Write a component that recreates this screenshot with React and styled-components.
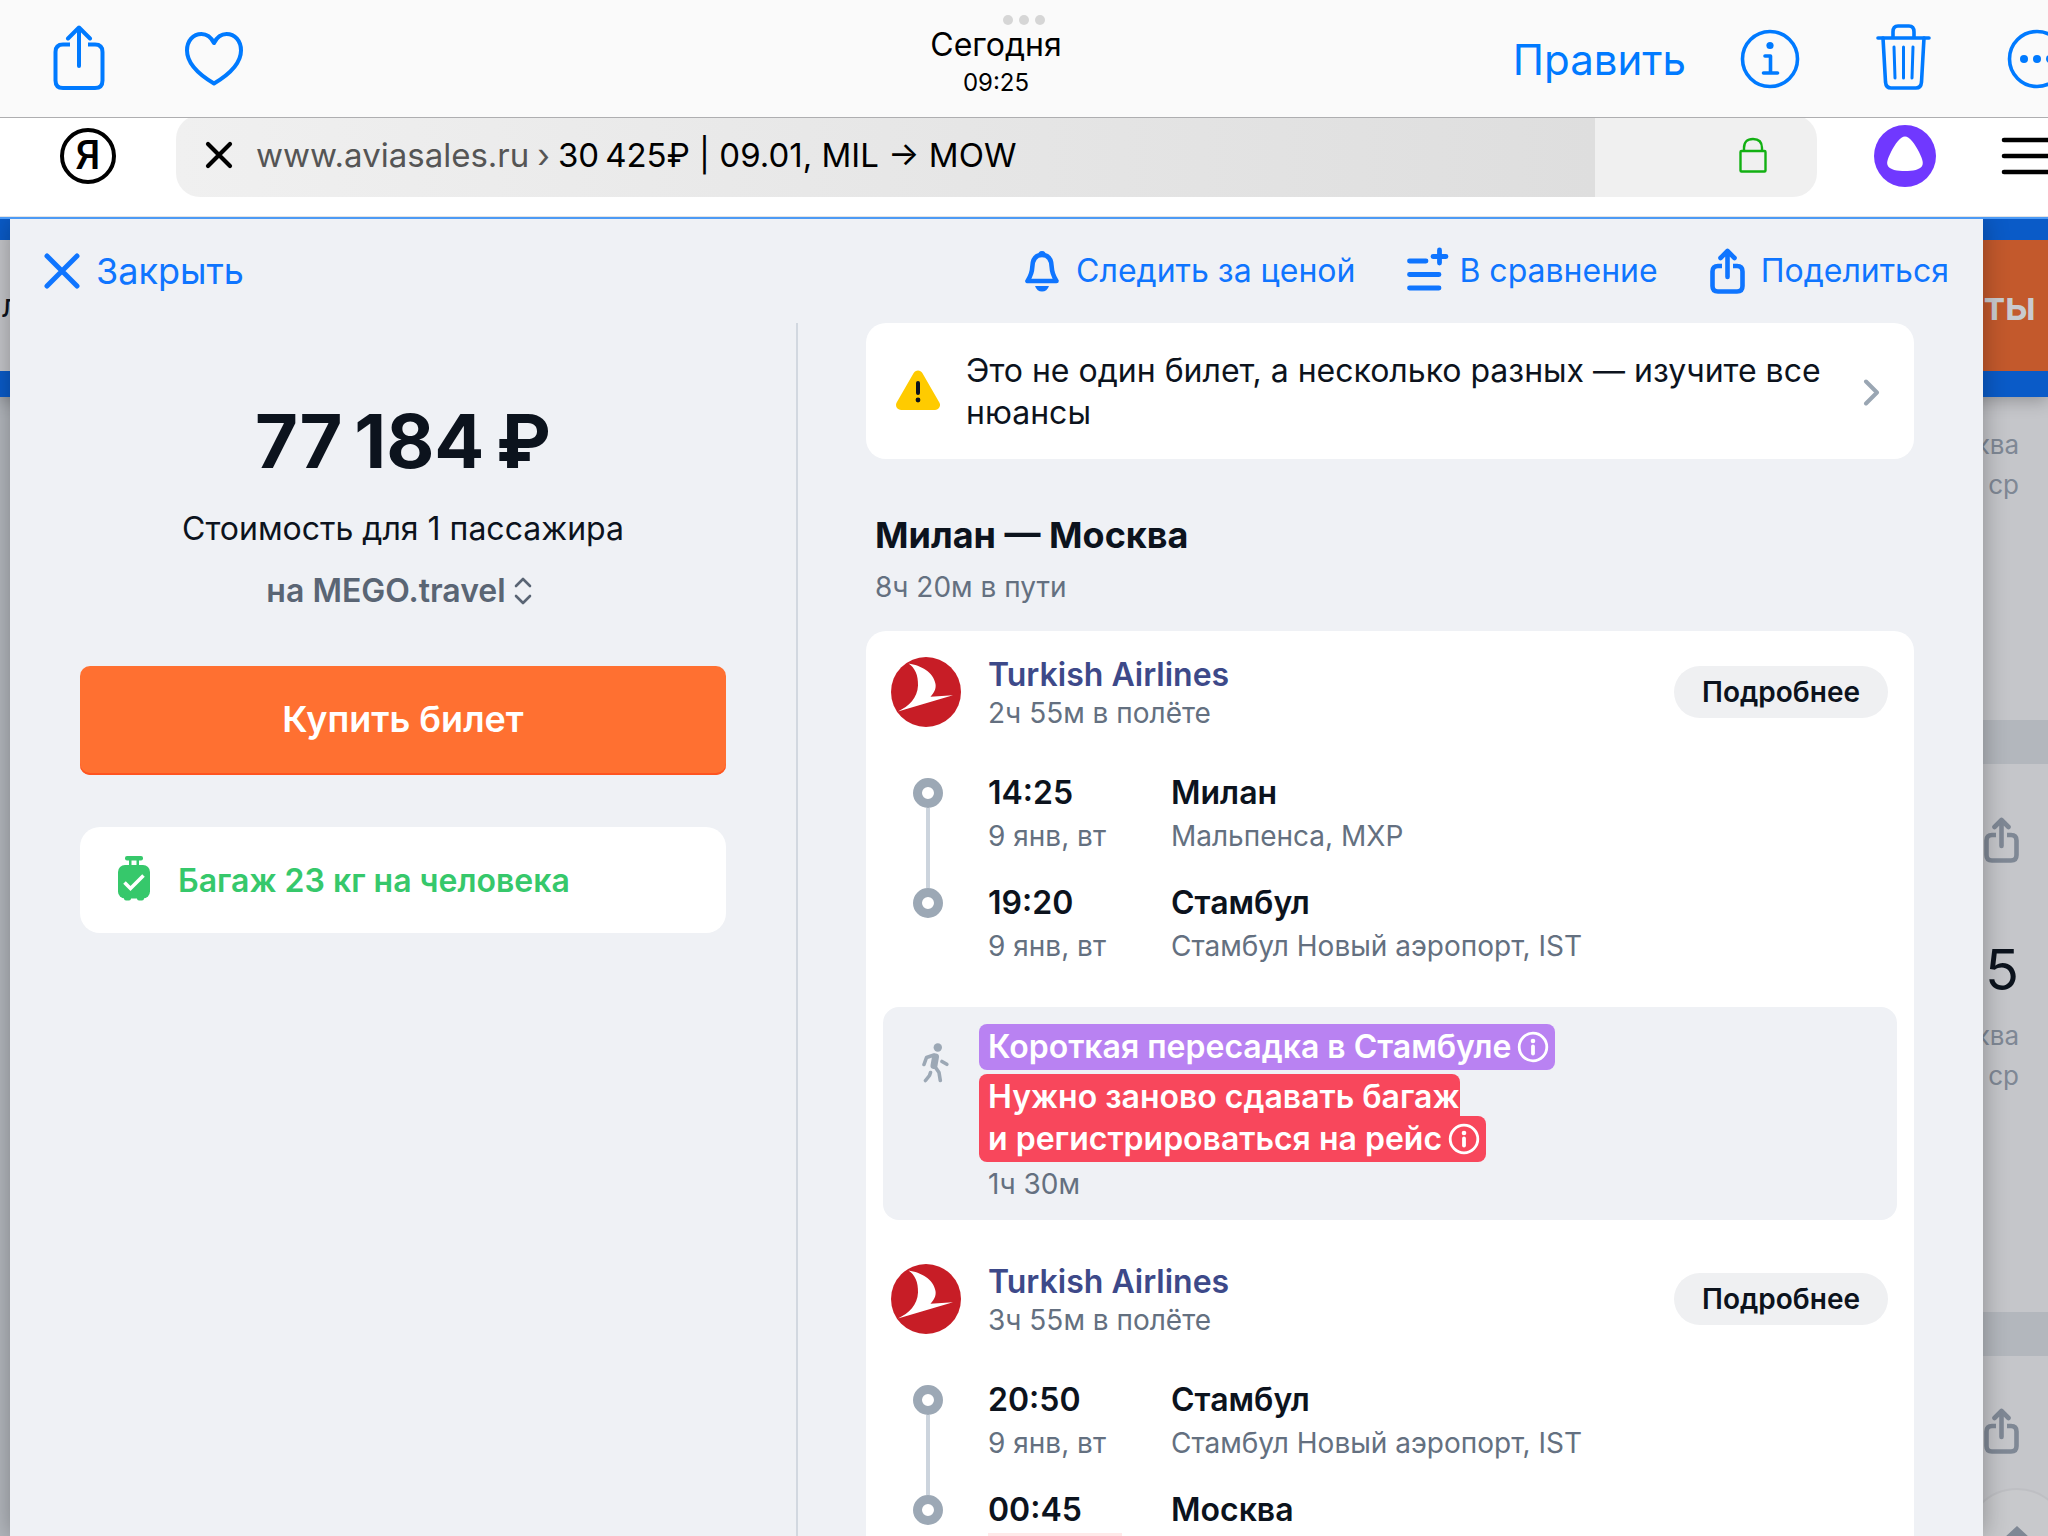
import React from 'react';
import styled, { createGlobalStyle } from 'styled-components';

const GlobalStyle = createGlobalStyle`
  * { box-sizing: border-box; }
  body { margin: 0; background: #ffffff; }
  button { font: inherit; color: inherit; background: none; border: 0; padding: 0; cursor: pointer; }
  h1, h2, h3, p { margin: 0; font-weight: inherit; }
  svg { display: block; flex: none; }
`;

const Screen = styled.div`
  height: 100vh;
  overflow: hidden;
  display: flex;
  flex-direction: column;
  font-family: Inter, "Liberation Sans", sans-serif;
  font-size: 32px;
  color: #0c131d;
`;

/* ---------- photo viewer toolbar ---------- */

const ViewerBar = styled.header`
  position: relative;
  flex: none;
  height: 118px;
  display: grid;
  grid-template-columns: 1fr auto 1fr;
  align-items: center;
  padding-right: 56px;
  background: #fafafa;
  border-bottom: 1px solid #aeaeb0;
  color: #007aff;
`;

const Grabber = styled.div`
  position: absolute;
  top: 15px;
  left: 0;
  right: 0;
  display: flex;
  justify-content: center;
  gap: 6px;
`;

const GrabberDot = styled.i`
  width: 10px;
  height: 10px;
  border-radius: 50%;
  background: #d6d6d6;
`;

const ViewerLeft = styled.div`
  display: flex;
  align-items: center;
  gap: 80px;
  padding-left: 53px;
`;

const ViewerRight = styled.div`
  display: flex;
  align-items: center;
  justify-content: flex-end;
  gap: 76px;
  margin-right: -75px;
`;

const EditGroup = styled.div`
  display: flex;
  align-items: center;
  gap: 54px;
`;

const EditButton = styled.button`
  padding-top: 2px;
  font-size: 42px;
  line-height: 50px;
`;

const ViewerTitle = styled.div`
  padding-top: 10px;
  text-align: center;
  color: #000000;
  line-height: 38px;
`;

const ViewerTime = styled.p`
  font-size: 24px;
`;

/* ---------- browser bar ---------- */

const BrowserBar = styled.div`
  flex: none;
  height: 99px;
  overflow: hidden;
  display: flex;
  align-items: center;
  gap: 60px;
  padding: 0 0 22px 60px;
  background: #ffffff;
  border-bottom: 1px solid #e4e4e4;
`;

const YandexButton = styled.button`
  flex: none;
  width: 56px;
  height: 56px;
  border: 4px solid #000000;
  border-radius: 50%;
  font: 500 40px/48px Roboto, "Liberation Sans", sans-serif;
  color: #000000;
`;

const AddressBar = styled.div`
  flex: 1;
  height: 82px;
  display: flex;
  align-items: center;
  padding: 0 50px 2px 29px;
  border-radius: 24px;
  background: linear-gradient(
    to right,
    #f0f0f0 0%,
    #dedede ${(p) => p.$progress}%,
    #f0f0f0 ${(p) => p.$progress}%
  );
  color: #000000;
`;

const Address = styled.span`
  flex: 1;
  display: flex;
  gap: 8px;
  margin-left: 23px;
  font-size: 33px;
  white-space: nowrap;
`;

const Host = styled.span`
  color: #555555;
`;

const BrowserTools = styled.div`
  display: flex;
  align-items: center;
  gap: 64px;
  margin-left: -3px;
`;

/* ---------- page behind the ticket ---------- */

const Stage = styled.div`
  flex: 1;
  min-height: 0;
  overflow: hidden;
  display: grid;
  grid-template: minmax(0, 1fr) / minmax(0, 1fr);
  border-top: 2px solid #4c9af5;
`;

const Backdrop = styled.div`
  grid-area: 1 / 1;
  overflow: hidden;
  display: flex;
  flex-direction: column;
  gap: 44px;
  background: #b3b7bd;
  color: #7f8895;
`;

const SearchHeader = styled.div`
  position: relative;
  flex: none;
  height: 178px;
  display: flex;
  padding: 21px 0 26px;
  margin-bottom: -44px;
  background: #0a5bc8;
  box-shadow: 0 4px 16px rgba(0, 0, 0, 0.25);
`;

const SearchField = styled.div`
  flex: 1;
  padding: 46px 0 0 2px;
  background: #c5c6ca;
  color: #0c131d;
  line-height: 40px;
`;

const SearchButton = styled.button`
  width: 300px;
  padding-right: 12px;
  background: #c3592c;
  color: #c9cbcf;
  font-size: 40px;
  font-weight: 600;
  text-align: right;
`;

const ResultCard = styled.section`
  flex: none;
  height: ${(p) => p.$height}px;
  margin-left: 12px;
  padding: ${(p) => p.$top}px 29px 0 0;
  display: flex;
  flex-direction: column;
  align-items: flex-end;
  background: #c5c6ca;
  font-size: 26px;
  line-height: 40px;
`;

const ResultTime = styled.p`
  margin: 73px 0 12px;
  font-size: 56px;
  line-height: 68px;
  color: #0c131d;
`;

const RoundButton = styled.button`
  flex: none;
  width: 104px;
  height: 104px;
  margin: 34px -50px 0 0;
  padding-top: 36px;
  display: flex;
  justify-content: center;
  border: 2px solid #bebfc3;
  border-radius: 50%;
  background: #c8c9cc;
`;

/* ---------- ticket window ---------- */

const Ticket = styled.main`
  grid-area: 1 / 1;
  z-index: 1;
  overflow: hidden;
  display: flex;
  flex-direction: column;
  margin: 0 65px 0 10px;
  background: #eff1f5;
  box-shadow: 0 0 24px rgba(0, 0, 0, 0.3);
`;

const TicketHeader = styled.header`
  flex: none;
  height: 104px;
  display: flex;
  align-items: center;
  gap: 52px;
  padding: 0 34px;
  color: #0f75ff;
`;

const HeaderButton = styled.button`
  display: flex;
  align-items: center;
  gap: 16px;
  font-size: ${(p) => (p.$large ? 36 : 32)}px;
  line-height: 44px;
  margin-right: ${(p) => (p.$large ? 'auto' : 0)};
`;

const TicketBody = styled.div`
  display: grid;
  grid-template-columns: 788px 1fr;
`;

const PricePane = styled.aside`
  height: 100%;
  display: flex;
  flex-direction: column;
  align-items: center;
  padding: 74px 70px 0;
  border-right: 2px solid #d2d8e0;
`;

const Price = styled.h1`
  font-size: 74px;
  font-weight: 700;
  line-height: 88px;
`;

const PriceNote = styled.p`
  margin-top: 23px;
  line-height: 42px;
`;

const Agency = styled.button`
  display: flex;
  align-items: center;
  gap: 8px;
  margin-top: 20px;
  padding-right: 8px;
  font-weight: 600;
  line-height: 42px;
  color: #5a6574;
`;

const BuyButton = styled.button`
  width: 100%;
  height: 109px;
  margin-top: 54px;
  padding-bottom: 4px;
  border-radius: 10px;
  background: #ff7031;
  box-shadow: inset 0 -2px 0 #ff5420;
  font-size: 36px;
  font-weight: 600;
  color: #ffffff;
`;

const Baggage = styled.div`
  width: 100%;
  height: 106px;
  display: flex;
  align-items: center;
  gap: 28px;
  margin-top: 52px;
  padding: 0 38px;
  border-radius: 20px;
  background: #ffffff;
  font-weight: 600;
  color: #36c86b;
`;

const RoutePane = styled.div`
  padding: 0 69px 0 68px;
`;

const Warning = styled.button`
  width: 100%;
  display: flex;
  align-items: center;
  gap: 26px;
  padding: 27px 34px 25px 30px;
  border-radius: 20px;
  background: #ffffff;
  line-height: 42px;
  text-align: left;
`;

const WarningText = styled.span`
  flex: 1;
`;

const RouteHeading = styled.div`
  display: flex;
  flex-direction: column;
  gap: 12px;
  padding: 54px 9px 26px;
`;

const RouteName = styled.h2`
  font-size: 36px;
  font-weight: 700;
  line-height: 44px;
`;

const Muted = styled.p`
  font-size: 28px;
  line-height: ${(p) => p.$line}px;
  color: #647080;
`;

const RouteCard = styled.section`
  border-radius: 20px;
  background: #ffffff;
  padding-bottom: 40px;
`;

const FlightHeader = styled.div`
  display: flex;
  align-items: flex-start;
  gap: 27px;
  height: 141px;
  padding: 26px 26px 0 25px;
`;

const FlightTitle = styled.div`
  flex: 1;
`;

const Airline = styled.h3`
  font-size: 32px;
  font-weight: 600;
  line-height: 36px;
  color: #3d4989;
`;

const DetailsButton = styled.button`
  height: 52px;
  margin-top: 9px;
  padding: 0 28px;
  border-radius: 26px;
  background: #eff0f2;
  font-size: 28px;
  font-weight: 600;
`;

const Point = styled.div`
  display: grid;
  grid-template-columns: 75px 183px 1fr;
  padding-left: 47px;
`;

const Rail = styled.div`
  width: 30px;
  display: flex;
  flex-direction: column;
  align-items: center;
`;

const RailLine = styled.i`
  flex: ${(p) => (p.$lead ? '0 0 6px' : '1')};
  width: 4px;
  background: ${(p) => (p.$shown ? '#ccd4dd' : 'transparent')};
`;

const RailStop = styled.i`
  width: 30px;
  height: 30px;
  border: 9px solid #9ca8b5;
  border-radius: 50%;
`;

const PointCell = styled.div`
  padding-bottom: ${(p) => (p.$last ? 0 : 24)}px;
`;

const PointMain = styled.p`
  font-weight: 600;
  line-height: 42px;
`;

const NextDay = styled.mark`
  display: block;
  width: 134px;
  height: 38px;
  margin-top: 2px;
  background: #ffe9e9;
`;

const Transfer = styled.div`
  display: grid;
  grid-template-columns: 96px 1fr;
  margin: 39px 17px 18px;
  padding: 17px 0 14px;
  border-radius: 16px;
  background: #eff1f5;
`;

const TransferIcon = styled.div`
  padding: 19px 0 0 39px;
`;

const TransferInfo = styled.div`
  display: flex;
  flex-direction: column;
  align-items: flex-start;
`;

const TagLine = styled.div`
  display: flex;
  align-items: center;
  gap: 6px;
  background: ${(p) => p.$color};
  font-weight: 600;
  color: #ffffff;
  line-height: ${(p) => (p.$part === 'top' ? 38 : 46)}px;
  padding: ${(p) => (p.$part === 'top' ? '4px 1px 0 9px' : '0 6px 0 9px')};
  border-radius: ${(p) =>
    p.$part === 'top' ? '8px 8px 0 0' : p.$part === 'bottom' ? '0 8px 8px 8px' : '8px'};
  margin-bottom: ${(p) => (p.$part ? 0 : 4)}px;
`;

const TransferTime = styled.div`
  padding-left: 9px;
`;

/* ---------- icons ---------- */

const line = (width) => ({
  fill: 'none',
  stroke: 'currentColor',
  strokeWidth: width,
  strokeLinecap: 'round',
  strokeLinejoin: 'round',
});

const ShareThin = () => (
  <svg width="52" height="68" viewBox="0 0 52 68" {...line(4)}>
    <path strokeLinecap="butt" d="M17 19.500H10Q2.500 19.500 2.500 27V55.500Q2.500 63 10 63H42Q49.500 63 49.500 55.500V27Q49.500 19.500 42 19.500H35" />
    <path d="M26 2.500V41M15 13.500 26 2.500 37 13.500" />
  </svg>
);

const Heart = () => (
  <svg width="58" height="54" viewBox="0 0 58 54" {...line(4)}>
    <path d="M29 11C26 5 22 2 16.500 2C8 2 2 9 2 18.500C2 31 13 42 29 51.500C45 42 56 31 56 18.500C56 9 50 2 41.500 2C36 2 32 5 29 11Z" />
  </svg>
);

const InfoLarge = () => (
  <svg width="60" height="60" viewBox="0 0 60 60" {...line(3.6)}>
    <circle cx="30" cy="30" r="27.500" />
    <path d="M25 27H30.500V44M23.500 44H37.500" />
    <circle cx="30" cy="16.500" r="3.600" fill="currentColor" stroke="none" />
  </svg>
);

const Trash = () => (
  <svg width="55" height="70" viewBox="0 0 55 70" {...line(3.6)}>
    <path d="M2 14H53M17 14V8Q17 2 22 2H33Q38 2 38 8V14" />
    <path d="M7 14 9.500 58Q10 64 15 64H40Q45 64 45.500 58L48 14" />
    <path strokeWidth="3" d="M18 23 19 54M27.500 23V54M37 23 36 54" />
  </svg>
);

const More = () => (
  <svg width="60" height="60" viewBox="0 0 60 60" {...line(3.6)}>
    <circle cx="30" cy="30" r="27.500" />
    <g fill="currentColor" stroke="none">
      <circle cx="17" cy="30" r="4" />
      <circle cx="30" cy="30" r="4" />
      <circle cx="43" cy="30" r="4" />
    </g>
  </svg>
);

const Cross = ({ size, width }) => (
  <svg width={size} height={size} viewBox={`0 0 ${size} ${size}`} {...line(width)}>
    <path d={`M3 3 ${size - 3} ${size - 3}M${size - 3} 3 3 ${size - 3}`} />
  </svg>
);

const Lock = () => (
  <svg width="28" height="36" viewBox="0 0 28 36" fill="none" stroke="#12b012" strokeWidth="2.400" strokeLinejoin="round">
    <rect x="1.500" y="14" width="25" height="20.500" rx="1" />
    <path d="M5 14V11Q5 2 14 2T23 11V14" />
  </svg>
);

const Alice = () => (
  <svg width="62" height="62" viewBox="0 0 62 62">
    <circle cx="31" cy="31" r="31" fill="#7038ff" />
    <path fill="#ffffff" d="M31 11.500C35.500 11.500 41 19 45 27C48 33 49.500 37 48.500 40C47 45 38 46 31 46C24 46 15 45 13.500 40C12.500 37 14 33 17 27C21 19 26.500 11.500 31 11.500Z" />
  </svg>
);

const Menu = () => (
  <svg width="48" height="38" viewBox="0 0 48 38" stroke="#000000" strokeWidth="4.600" strokeLinecap="round">
    <path d="M4 3H60M4 19H60M4 35H60" />
  </svg>
);

const Bell = () => (
  <svg width="36" height="42" viewBox="0 0 36 42" {...line(4.6)}>
    <path d="M18 5C10.500 5 8.500 11 8.300 17C8 24 6 27 3.500 31H32.500C30 27 28 24 27.700 17C27.500 11 25.500 5 18 5Z" />
    <path fill="currentColor" stroke="none" d="M14 6Q14 1 18 1T22 6ZM11 36H25Q23 41.500 18 41.500T11 36Z" />
  </svg>
);

const Compare = () => (
  <svg width="36" height="46" viewBox="0 2 36 46" overflow="visible" {...line(4.8)}>
    <path d="M2.500 15H19M2.500 28.500H32M2.500 42H32M32.500 4V17M26 10.500H39" />
  </svg>
);

const Share = () => (
  <svg width="35" height="46" viewBox="0 0 35 46" {...line(4.6)}>
    <path strokeLinecap="butt" d="M12 18H8Q2.500 18 2.500 23.500V38Q2.500 43.500 8 43.500H27Q32.500 43.500 32.500 38V23.500Q32.500 18 27 18H23" />
    <path d="M17.500 3V29M10.500 10 17.500 3 24.500 10" />
  </svg>
);

const UpDown = () => (
  <svg width="18" height="28" viewBox="0 0 18 28" {...line(2.6)}>
    <path d="M2 9 9 2 16 9M2 19 9 26 16 19" />
  </svg>
);

const Suitcase = () => (
  <svg width="32" height="48" viewBox="0 0 32 48" fill="currentColor">
    <rect x="7" y="0" width="18" height="4.500" rx="2" />
    <path d="M11 4H13.500V10H11ZM18.500 4H21V10H18.500Z" />
    <rect x="0" y="9" width="32" height="33.500" rx="7" />
    <rect x="6" y="38" width="7" height="6.500" rx="2" />
    <rect x="19" y="38" width="7" height="6.500" rx="2" />
    <path d="M6.500 26.500 12.500 32.500 25.500 19.500" fill="none" stroke="#ffffff" strokeWidth="3.600" />
  </svg>
);

const WarningSign = () => (
  <svg width="44" height="44" viewBox="0 0 44 44">
    <path fill="#ffcb00" stroke="#ffcb00" strokeWidth="10" strokeLinejoin="round" d="M22 5.500 39 35H5Z" />
    <path stroke="#0c131d" strokeWidth="4" strokeLinecap="round" d="M22 13V23" />
    <circle cx="22" cy="30" r="2.400" fill="#0c131d" />
  </svg>
);

const Chevron = () => (
  <svg width="17" height="27" viewBox="0 0 17 27" stroke="#9aa6b3" fill="none" strokeWidth="4" strokeLinecap="round" strokeLinejoin="round">
    <path d="M3 2.500 14 13.500 3 24.500" />
  </svg>
);

const TurkishLogo = () => (
  <svg width="70" height="70" viewBox="0 0 70 70">
    <circle cx="35" cy="35" r="35" fill="#c71d26" />
    <path fill="#ffffff" d="M17.500 6.500C30 8.500 42.500 15 44.500 27C45.300 32 43 36 39.500 39.700L62 38.300L7 54.500C18 49 26.500 41 27 28.500C27.300 18 24 11 17.500 6.500Z" />
  </svg>
);

const Walker = () => (
  <svg width="27" height="40" viewBox="0 0 27 40" fill="none" stroke="#9ca8b5" strokeWidth="3.600" strokeLinecap="round" strokeLinejoin="round">
    <circle cx="15.800" cy="4.500" r="4.200" fill="#9ca8b5" stroke="none" />
    <path d="M2 21.500 4.500 14.500 12 12" />
    <path d="M13.500 14 12 22.500" strokeWidth="7" />
    <path d="M12.500 23 17 29.500 18.300 37.500M8.500 29.500 7.500 32.500 3.500 37.500M20 18.500 24.800 21.300" />
  </svg>
);

const InfoSmall = () => (
  <svg width="32" height="32" viewBox="0 0 32 32" {...line(2.8)}>
    <circle cx="16" cy="16" r="13.800" />
    <path d="M16 15.500V22.500" strokeWidth="3.800" />
    <circle cx="16" cy="10" r="2.300" fill="currentColor" stroke="none" />
  </svg>
);

const ArrowTip = () => (
  <svg width="28" height="28" viewBox="0 0 28 28">
    <path fill="#7f8895" d="M14 0 27 12H18V28H10V12H1Z" />
  </svg>
);

/* ---------- data ---------- */

const flights = [
  {
    duration: '2ч 55м в полёте',
    stops: [
      { time: '14:25', date: '9 янв, вт', city: 'Милан', airport: 'Мальпенса, MXP' },
      { time: '19:20', date: '9 янв, вт', city: 'Стамбул', airport: 'Стамбул Новый аэропорт, IST' },
    ],
  },
  {
    duration: '3ч 55м в полёте',
    stops: [
      { time: '20:50', date: '9 янв, вт', city: 'Стамбул', airport: 'Стамбул Новый аэропорт, IST' },
      { time: '00:45', nextDay: true, city: 'Москва' },
    ],
  },
];

function Flight({ flight }) {
  return (
    <>
      <FlightHeader>
        <TurkishLogo />
        <FlightTitle>
          <Airline>Turkish Airlines</Airline>
          <Muted $line={40}>{flight.duration}</Muted>
        </FlightTitle>
        <DetailsButton>Подробнее</DetailsButton>
      </FlightHeader>
      {flight.stops.map((stop, i) => {
        const last = i === flight.stops.length - 1;
        return (
          <Point key={stop.time}>
            <Rail>
              <RailLine $lead $shown={i > 0} />
              <RailStop />
              <RailLine $shown={!last} />
            </Rail>
            <PointCell $last={last}>
              <PointMain>{stop.time}</PointMain>
              {stop.nextDay ? <NextDay /> : <Muted $line={44}>{stop.date}</Muted>}
            </PointCell>
            <PointCell $last={last}>
              <PointMain>{stop.city}</PointMain>
              {stop.airport && <Muted $line={44}>{stop.airport}</Muted>}
            </PointCell>
          </Point>
        );
      })}
    </>
  );
}

export default function App() {
  return (
    <Screen>
      <GlobalStyle />
      <ViewerBar>
        <Grabber>
          <GrabberDot />
          <GrabberDot />
          <GrabberDot />
        </Grabber>
        <ViewerLeft>
          <button aria-label="Отправить"><ShareThin /></button>
          <button aria-label="Избранное"><Heart /></button>
        </ViewerLeft>
        <ViewerTitle>
          <p>Сегодня</p>
          <ViewerTime>09:25</ViewerTime>
        </ViewerTitle>
        <ViewerRight>
          <EditGroup>
            <EditButton>Править</EditButton>
            <button aria-label="Сведения"><InfoLarge /></button>
          </EditGroup>
          <button aria-label="Удалить"><Trash /></button>
          <button aria-label="Ещё"><More /></button>
        </ViewerRight>
      </ViewerBar>

      <BrowserBar>
        <YandexButton>Я</YandexButton>
        <AddressBar $progress={86.5}>
          <button aria-label="Остановить"><Cross size={28} width={4.2} /></button>
          <Address>
            <Host>www.aviasales.ru</Host>
            <Host>›</Host>
            <span>30{'\u2009'}425₽ | 09.01, MIL → MOW</span>
          </Address>
          <Lock />
        </AddressBar>
        <BrowserTools>
          <button aria-label="Алиса"><Alice /></button>
          <button aria-label="Меню"><Menu /></button>
        </BrowserTools>
      </BrowserBar>

      <Stage>
        <Backdrop>
          <SearchHeader>
            <SearchField>л</SearchField>
            <SearchButton>ты</SearchButton>
          </SearchHeader>
          <ResultCard $height={323} $top={28}>
            <p>ква</p>
            <p>ср</p>
          </ResultCard>
          <ResultCard $height={548} $top={53}>
            <Share />
            <ResultTime>5</ResultTime>
            <p>ква</p>
            <p>ср</p>
          </ResultCard>
          <ResultCard $height={548} $top={52}>
            <Share />
            <RoundButton aria-label="Наверх"><ArrowTip /></RoundButton>
          </ResultCard>
        </Backdrop>

        <Ticket>
          <TicketHeader>
            <HeaderButton $large><Cross size={36} width={5} />Закрыть</HeaderButton>
            <HeaderButton><Bell />Следить за ценой</HeaderButton>
            <HeaderButton><Compare />В сравнение</HeaderButton>
            <HeaderButton><Share />Поделиться</HeaderButton>
          </TicketHeader>
          <TicketBody>
            <PricePane>
              <Price>77{'\u2009'}184{'\u2009'}₽</Price>
              <PriceNote>Стоимость для 1 пассажира</PriceNote>
              <Agency>на MEGO.travel<UpDown /></Agency>
              <BuyButton>Купить билет</BuyButton>
              <Baggage><Suitcase />Багаж 23 кг на человека</Baggage>
            </PricePane>
            <RoutePane>
              <Warning>
                <WarningSign />
                <WarningText>Это не один билет, а несколько разных — изучите все нюансы</WarningText>
                <Chevron />
              </Warning>
              <RouteHeading>
                <RouteName>Милан — Москва</RouteName>
                <Muted $line={36}>8ч 20м в пути</Muted>
              </RouteHeading>
              <RouteCard>
                <Flight flight={flights[0]} />
                <Transfer>
                  <TransferIcon><Walker /></TransferIcon>
                  <TransferInfo>
                    <TagLine $color="#b982f2">Короткая пересадка в Стамбуле<InfoSmall /></TagLine>
                    <TagLine $color="#f8475c" $part="top">Нужно заново сдавать багаж</TagLine>
                    <TagLine $color="#f8475c" $part="bottom">и регистрироваться на рейс<InfoSmall /></TagLine>
                    <TransferTime><Muted $line={44}>1ч 30м</Muted></TransferTime>
                  </TransferInfo>
                </Transfer>
                <Flight flight={flights[1]} />
              </RouteCard>
            </RoutePane>
          </TicketBody>
        </Ticket>
      </Stage>
    </Screen>
  );
}
